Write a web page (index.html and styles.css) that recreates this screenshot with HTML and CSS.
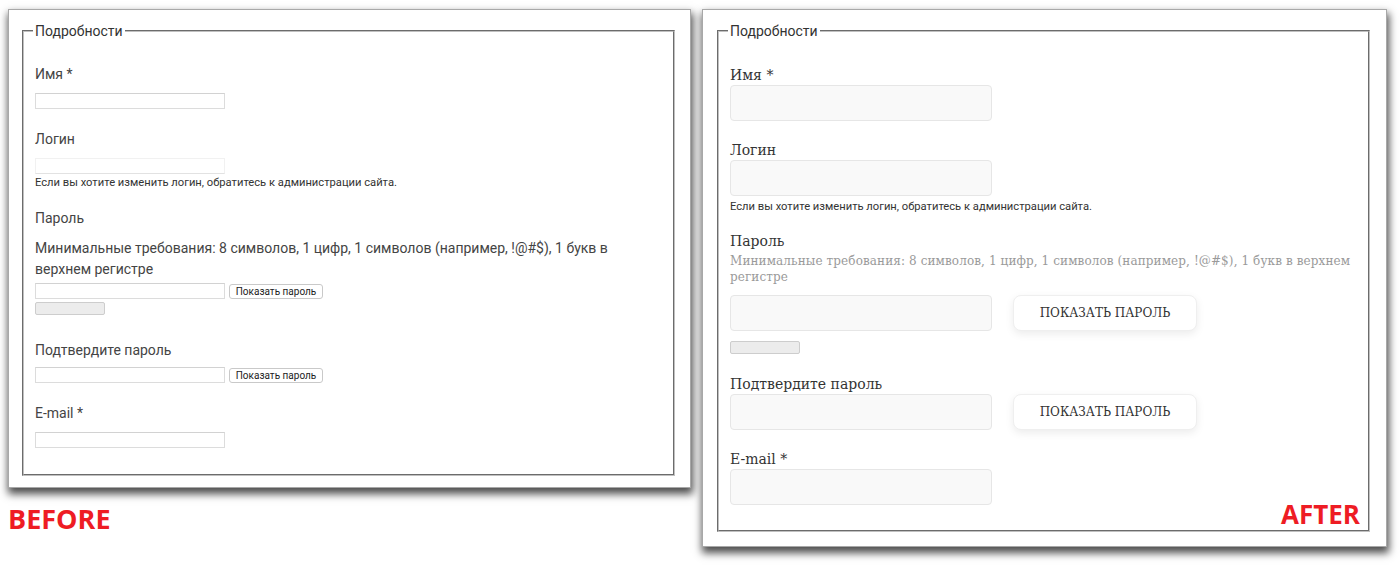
FILE: index.html
```html
<!DOCTYPE html>
<html lang="ru">
<head>
<meta charset="utf-8">
<title>Before / After</title>
<link rel="stylesheet" href="styles.css">
</head>
<body>
<div class="stage">
  <div class="col">
    <section class="shot shot-before">
      <fieldset class="fs fs-before">
        <legend class="legend">Подробности</legend>
        <div class="b-item">
          <label class="b-label">Имя *</label>
          <input class="b-input" type="text">
        </div>
        <div class="b-item">
          <label class="b-label">Логин</label>
          <input class="b-input b-input-ro" type="text" readonly>
          <div class="help b-help">Если вы хотите изменить логин, обратитесь к администрации сайта.</div>
        </div>
        <div class="b-item b-item-after-help">
          <label class="b-label b-label-tight">Пароль</label>
          <div class="b-desc">Минимальные требования: 8 символов, 1 цифр, 1 символов (например, !@#$), 1 букв в верхнем регистре</div>
          <div class="b-row">
            <input class="b-input" type="password">
            <button class="b-btn" type="button">Показать пароль</button>
          </div>
          <div class="b-bar"></div>
        </div>
        <div class="b-item b-item-after-bar">
          <label class="b-label b-label-confirm">Подтвердите пароль</label>
          <div class="b-row">
            <input class="b-input" type="password">
            <button class="b-btn" type="button">Показать пароль</button>
          </div>
        </div>
        <div class="b-item">
          <label class="b-label">E-mail *</label>
          <input class="b-input" type="email">
        </div>
      </fieldset>
    </section>
    <div class="tag tag-before">BEFORE</div>
  </div>

  <div class="col">
    <section class="shot shot-after">
      <fieldset class="fs fs-after">
        <legend class="legend">Подробности</legend>
        <div class="a-item">
          <label class="a-label">Имя *</label>
          <input class="a-input" type="text">
        </div>
        <div class="a-item">
          <label class="a-label">Логин</label>
          <input class="a-input" type="text" readonly>
          <div class="help a-help">Если вы хотите изменить логин, обратитесь к администрации сайта.</div>
        </div>
        <div class="a-item a-item-after-help">
          <label class="a-label">Пароль</label>
          <div class="a-desc">Минимальные требования: 8 символов, 1 цифр, 1 символов (например, !@#$), 1 букв в верхнем регистре</div>
          <div class="a-row a-row-pass">
            <input class="a-input" type="password">
            <button class="a-btn" type="button">Показать пароль</button>
          </div>
          <div class="a-bar"></div>
        </div>
        <div class="a-item a-item-after-bar">
          <label class="a-label">Подтвердите пароль</label>
          <div class="a-row">
            <input class="a-input" type="password">
            <button class="a-btn" type="button">Показать пароль</button>
          </div>
        </div>
        <div class="a-item">
          <label class="a-label">E-mail *</label>
          <input class="a-input" type="email">
        </div>
        <div class="tag tag-after">AFTER</div>
      </fieldset>
    </section>
  </div>
</div>
</body>
</html>
```

FILE: styles.css
```css
html, body {
  margin: 0;
  padding: 0;
  background: #ffffff;
}

body {
  min-height: 567px;
  font-family: Roboto, "Liberation Sans", sans-serif;
  color: #444;
}

.stage {
  display: flex;
  align-items: flex-start;
  gap: 11px;
  padding: 9px 0 0 8px;
}

.col {
  display: flex;
  flex-direction: column;
}

/* screenshot frames */
.shot {
  box-sizing: border-box;
  background: #fff;
  border: 1px solid #a8a8a8;
  box-shadow: 1px 5px 8px 1px rgba(0, 0, 0, 0.7);
}

.shot-before {
  width: 683px;
  padding: 11px 15px 11px 13px;
}

.shot-after {
  width: 685px;
  padding: 11px 16px 14px 14px;
}

/* fieldset */
.fs {
  margin: 0;
  min-width: 0;
  border: 2px groove #c0c0c0;
  padding: 23px 11px 26px;
}

.fs-after {
  position: relative;
  padding-top: 24px;
  padding-bottom: 25px;
}

.legend {
  margin-left: -2px;
  padding: 0 2px;
  font: 14px/20px Roboto, sans-serif;
  color: #333;
}

.help {
  font: 11.2px/15px Roboto, sans-serif;
  color: #333;
}

/* ---------- BEFORE ---------- */
.b-item + .b-item {
  margin-top: 20px;
}

.b-item-after-help.b-item {
  margin-top: 18px;
}

.b-item-after-bar.b-item {
  margin-top: 25px;
}

.b-label {
  display: block;
  font: 14px/20px Roboto, sans-serif;
  color: #444;
  margin-bottom: 9px;
}

.b-label-tight {
  margin-bottom: 0;
}

.b-label-confirm {
  margin-bottom: 7px;
}

.b-input {
  display: block;
  box-sizing: border-box;
  width: 190px;
  height: 16px;
  margin: 0;
  padding: 0;
  background: #fff;
  border: 1px solid #dcdcdc;
  border-top-color: #d2d2d2;
  border-radius: 0;
}

.b-input-ro {
  border-color: #f1f1f1;
  border-bottom-color: #e2e2e2;
}

.b-help {
  margin-top: 1px;
}

.b-desc {
  margin: 10px 0 3px;
  font: 14px/21px Roboto, sans-serif;
  color: #444;
}

.b-row {
  display: flex;
  align-items: center;
  gap: 4px;
}

.b-btn {
  box-sizing: border-box;
  width: 94px;
  height: 15px;
  margin: 0;
  padding: 0;
  font: 10px/13px Roboto, sans-serif;
  color: #222;
  background: #fff;
  border: 1px solid #c9c9c9;
  border-radius: 3px;
}

.b-bar {
  box-sizing: border-box;
  width: 70px;
  height: 13px;
  margin-top: 3px;
  background: #ececec;
  border: 1px solid #cdcdcd;
  border-radius: 2px;
}

/* ---------- AFTER ---------- */
.a-item + .a-item {
  margin-top: 19px;
}

.a-item-after-help.a-item {
  margin-top: 17px;
}

.a-item-after-bar.a-item {
  margin-top: 20px;
}

.a-label {
  display: block;
  font: 14px/20px "DejaVu Serif", "Liberation Serif", serif;
  color: #333;
}

.a-input {
  display: block;
  box-sizing: border-box;
  width: 262px;
  height: 36px;
  margin: 0;
  padding: 0 10px;
  background: #f9f9f9;
  border: 1px solid #e6e6e6;
  border-radius: 4px;
}

.a-help {
  margin-top: 3px;
}

.a-desc {
  margin: 2px 0 10px;
  font: 12px/16px "DejaVu Serif", "Liberation Serif", serif;
  letter-spacing: 0.1px;
  color: #9a9a9a;
}

.a-row {
  display: flex;
  align-items: center;
  gap: 21px;
}

.a-btn {
  box-sizing: border-box;
  width: 184px;
  height: 36px;
  margin: 0;
  padding: 0;
  font: 12px/16px "DejaVu Serif", "Liberation Serif", serif;
  color: #333;
  text-transform: uppercase;
  background: #fff;
  border: 1px solid #efefef;
  border-radius: 8px;
  box-shadow: 0 3px 8px rgba(0, 0, 0, 0.08);
}

.a-bar {
  box-sizing: border-box;
  width: 70px;
  height: 13px;
  margin-top: 10px;
  background: #ececec;
  border: 1px solid #cdcdcd;
  border-radius: 2px;
}

/* ---------- tags ---------- */
.tag {
  font: 700 26px/30px "Open Sans", "Liberation Sans", sans-serif;
  color: #ee1c24;
}

.tag-before {
  margin-top: 16px;
  font-size: 27px;
}

.tag-after {
  position: absolute;
  right: 8px;
  bottom: 1px;
}
```
